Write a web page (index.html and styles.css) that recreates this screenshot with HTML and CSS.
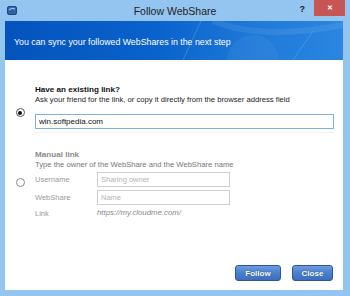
FILE: index.html
```html
<!DOCTYPE html>
<html lang="en">
<head>
  <meta charset="UTF-8">
  <title>Follow WebShare</title>
  <link rel="stylesheet" href="styles.css">
</head>
<body>

  <div class="window">

    <!-- title bar -->
    <div class="titlebar">
      <div class="tb-left">
        <svg class="app-icon" width="10" height="9" viewBox="0 0 10 9">
          <rect x="0.5" y="0.5" width="9" height="8" rx="1.5" fill="#2f63a8" stroke="#1d467e" stroke-width="1"/>
          <path d="M2 4 Q5 1.5 8 3" stroke="#9cc4ee" stroke-width="1.2" fill="none"/>
        </svg>
      </div>
      <div class="tb-title">Follow WebShare</div>
      <div class="tb-right">
        <span class="help-btn">?</span>
        <span class="close-btn">&#x2715;</span>
      </div>
    </div>

    <div class="frame">

      <!-- blue banner -->
      <div class="banner">
        <svg class="banner-deco" width="200" height="39" viewBox="0 0 200 39">
          <path d="M40 39 L58 0" stroke="rgba(255,255,255,0.18)" stroke-width="1" fill="none"/>
          <path d="M150 39 L170 10" stroke="rgba(255,255,255,0.15)" stroke-width="1" fill="none"/>
          <circle cx="110" cy="40" r="26" fill="rgba(255,255,255,0.05)"/>
          <path d="M70 0 Q120 20 200 4" stroke="rgba(255,255,255,0.08)" stroke-width="6" fill="none"/>
        </svg>
        <span class="banner-text">You can sync your followed WebShares in the next step</span>
      </div>

      <div class="content">

        <!-- existing link -->
        <div class="option existing">
          <div class="radio-col"><span class="radio checked"></span></div>
          <div class="option-body">
            <div class="opt-title">Have an existing link?</div>
            <div class="opt-desc">Ask your friend for the link, or copy it directly from the browser address field</div>
            <input type="text" class="link-input" value="win.softpedia.com">
            <div class="divider"></div>
          </div>
        </div>

        <!-- manual link -->
        <div class="option manual">
          <div class="radio-col"><span class="radio"></span></div>
          <div class="option-body">
            <div class="opt-title">Manual link</div>
            <div class="opt-desc">Type the owner of the WebShare and the WebShare name</div>
            <div class="field-grid">
              <span class="field-label">Username</span>
              <input type="text" class="field-input" placeholder="Sharing owner">
              <span class="field-label">WebShare</span>
              <input type="text" class="field-input" placeholder="Name">
              <span class="field-label">Link</span>
              <span class="link-url">https://my.cloudme.com/</span>
            </div>
          </div>
        </div>

        <!-- buttons -->
        <div class="actions">
          <button class="dlg-btn follow">Follow</button>
          <button class="dlg-btn close">Close</button>
        </div>

      </div>
    </div>
  </div>

</body>
</html>
```

FILE: styles.css
```css
body {
  margin: 0;
  font-family: 'Liberation Sans', Arial, sans-serif;
  background-color: #93c5f0;
}

.window {
  width: 350px;
  height: 296px;
  background-color: #93c5f0;
  display: flex;
  flex-direction: column;
}

/* title bar */
.titlebar {
  height: 21px;
  display: grid;
  grid-template-columns: 1fr auto 1fr;
  align-items: start;
}

.tb-left {
  padding: 6px 0 0 7px;
}

.app-icon {
  display: block;
}

.tb-title {
  font-size: 10.5px;
  color: #1e1e1e;
  line-height: 12px;
  padding-top: 5px;
}

.tb-right {
  display: flex;
  justify-content: flex-end;
  align-items: flex-start;
  padding-right: 5px;
}

.help-btn {
  font-size: 9px;
  font-weight: bold;
  color: #222;
  line-height: 10px;
  padding-top: 4px;
  margin-right: 9px;
}

.close-btn {
  width: 31px;
  height: 16px;
  background-color: #c85454;
  color: #fff;
  font-size: 7px;
  font-weight: bold;
  line-height: 16px;
  text-align: center;
}

.frame {
  flex: 1;
  margin: 0 7px 6px 5px;
  display: flex;
  flex-direction: column;
  background-color: #fff;
}

/* banner */
.banner {
  height: 39px;
  position: relative;
  overflow: hidden;
  display: flex;
  align-items: center;
  padding-left: 9px;
  background: linear-gradient(90deg, #0453bd 0%, #0a62cc 45%, #1f7ad9 75%, #2a86e0 100%);
}

.banner-deco {
  position: absolute;
  right: 0;
  top: 0;
}

.banner-text {
  position: relative;
  color: #fff;
  font-size: 8.8px;
  padding-top: 2px;
}

/* options */
.content {
  flex: 1;
  display: flex;
  flex-direction: column;
}

.option {
  display: grid;
  grid-template-columns: 30px 1fr;
  padding-right: 9px;
}

.radio-col {
  display: flex;
  justify-content: center;
}

.radio {
  width: 7px;
  height: 7px;
  border: 1px solid #8a8a8a;
  border-radius: 50%;
  background-color: #fff;
  position: relative;
}

.radio.checked {
  border-color: #555;
}

.radio.checked::after {
  content: "";
  position: absolute;
  left: 1.5px;
  top: 1.5px;
  width: 4px;
  height: 4px;
  border-radius: 50%;
  background-color: #111;
}

.existing {
  padding-top: 25px;
}

.existing .radio {
  margin-top: 23px;
}

.manual {
  padding-top: 17px;
}

.manual .radio {
  margin-top: 28px;
}

.opt-title {
  font-size: 8.1px;
  font-weight: bold;
  line-height: 10px;
  color: #111;
}

.opt-desc {
  font-size: 7.65px;
  line-height: 10px;
  color: #222;
}

.link-input {
  display: block;
  box-sizing: border-box;
  width: 299px;
  height: 15px;
  margin-top: 9px;
  padding: 0 3px;
  border: 1px solid #7ab2e6;
  font-family: 'Liberation Sans', Arial, sans-serif;
  font-size: 8px;
  color: #111;
  outline: none;
}

.divider {
  height: 1px;
  margin-top: 3px;
  background-color: #f1f1f1;
}

.manual .opt-title {
  color: #8a8a8a;
}

.manual .opt-desc {
  color: #777;
}

.field-grid {
  display: grid;
  grid-template-columns: 62px 133px;
  row-gap: 3px;
  align-items: center;
  margin-top: 2px;
}

.field-label {
  font-size: 7.5px;
  color: #999;
}

.field-input {
  box-sizing: border-box;
  height: 15px;
  padding: 0 3px;
  border: 1px solid #cfcfcf;
  font-family: 'Liberation Sans', Arial, sans-serif;
  font-size: 7.5px;
  outline: none;
}

.field-input::placeholder {
  color: #b5b5b5;
}

.link-url {
  font-size: 7.8px;
  font-style: italic;
  color: #888;
  line-height: 10px;
}

/* buttons */
.actions {
  margin-top: auto;
  display: flex;
  justify-content: flex-end;
  gap: 11px;
  padding: 0 10px 9px 0;
}

.dlg-btn {
  height: 16px;
  padding: 0;
  border: 1px solid #2b5798;
  border-radius: 3px;
  background: linear-gradient(#6d9be0, #4a7fcc 50%, #3b6fbe);
  color: #fff;
  font-family: 'Liberation Sans', Arial, sans-serif;
  font-size: 8px;
  font-weight: bold;
  text-shadow: 0 0 1px #1d3e70;
}

.dlg-btn.follow {
  width: 46px;
}

.dlg-btn.close {
  width: 41px;
}
```
